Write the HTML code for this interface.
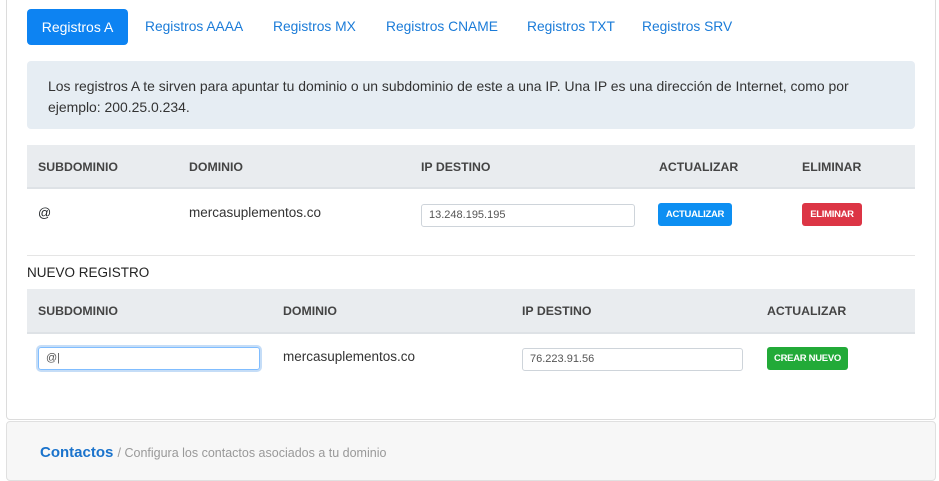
<!DOCTYPE html>
<html><head><meta charset="utf-8"><style>
*{box-sizing:border-box;margin:0;padding:0}
body{width:939px;height:475px;background:#fff;font-family:"Liberation Sans",sans-serif;color:#212529;position:relative;overflow:hidden;font-size:14px}
.a{position:absolute;white-space:nowrap}
.card{position:absolute;left:6px;top:-2px;width:930px;height:422px;border:1px solid #dcdcdc;border-top:none;border-radius:0 0 4px 4px;background:#fff}
.foot{position:absolute;left:6px;top:421px;width:930px;height:60px;background:#f7f7f7;border:1px solid #e0e0e0;border-radius:4px}
.tab{color:#1a7bd8;font-size:13.8px;top:19px}
.th{font-weight:bold;font-size:12.3px;color:#444}
.inp{position:absolute;height:23px;border:1px solid #ced4da;border-radius:3px;font-size:11px;color:#555;padding:4px 7px}
.btn{position:absolute;color:#fff;font-weight:bold;font-size:9.5px;border-radius:3px;text-align:center;line-height:23px;letter-spacing:-0.3px}
</style></head><body>
<div class="card"></div>
<div class="a" style="left:27px;top:9px;width:101px;height:36px;background:#0d83f2;border-radius:4px;color:#fff;text-align:center;line-height:36px;font-size:14px">Registros A</div>
<div class="a tab" style="left:145px">Registros AAAA</div>
<div class="a tab" style="left:273px">Registros MX</div>
<div class="a tab" style="left:386px">Registros CNAME</div>
<div class="a tab" style="left:527px">Registros TXT</div>
<div class="a tab" style="left:642px">Registros SRV</div>
<div class="a" style="left:27px;top:61px;width:888px;height:68px;background:#e6edf3;border-radius:4px"></div>
<div class="a" style="left:48px;top:76px;font-size:13.95px;color:#333;line-height:21px">Los registros A te sirven para apuntar tu dominio o un subdominio de este a una IP. Una IP es una dirección de Internet, como por<br>ejemplo: 200.25.0.234.</div>
<div class="a" style="left:27px;top:145px;width:888px;height:44px;background:#e9ecef;border-bottom:2px solid #dee2e6"></div>
<div class="a th" style="left:38px;top:160px">SUBDOMINIO</div>
<div class="a th" style="left:189px;top:160px">DOMINIO</div>
<div class="a th" style="left:421px;top:160px">IP DESTINO</div>
<div class="a th" style="left:659px;top:160px">ACTUALIZAR</div>
<div class="a th" style="left:802px;top:160px">ELIMINAR</div>
<div class="a" style="left:38px;top:205px;font-size:13px">@</div>
<div class="a" style="left:189px;top:205px;font-size:13.5px;color:#333">mercasuplementos.co</div>
<div class="inp" style="left:421px;top:204px;width:214px">13.248.195.195</div>
<div class="btn" style="left:658px;top:203px;width:74px;background:#0d8ff2">ACTUALIZAR</div>
<div class="btn" style="left:802px;top:203px;width:60px;background:#dc3545">ELIMINAR</div>
<div class="a" style="left:27px;top:255px;width:888px;height:1px;background:#e5e5e5"></div>
<div class="a" style="left:27px;top:265px;font-size:13.5px;color:#222">NUEVO REGISTRO</div>
<div class="a" style="left:27px;top:289px;width:888px;height:45px;background:#e9ecef;border-bottom:2px solid #dee2e6"></div>
<div class="a th" style="left:38px;top:304px">SUBDOMINIO</div>
<div class="a th" style="left:283px;top:304px">DOMINIO</div>
<div class="a th" style="left:522px;top:304px">IP DESTINO</div>
<div class="a th" style="left:767px;top:304px">ACTUALIZAR</div>
<div class="inp" style="left:38px;top:347px;width:222px;border-color:#80bdff;box-shadow:0 0 0 2px #c5ddf7;font-size:11px">@|</div>
<div class="a" style="left:283px;top:349px;font-size:13.5px;color:#333">mercasuplementos.co</div>
<div class="inp" style="left:522px;top:348px;width:221px">76.223.91.56</div>
<div class="btn" style="left:767px;top:347px;width:81px;background:#22aa38">CREAR NUEVO</div>
<div class="foot"></div>
<div class="a" style="left:40px;top:444px;font-size:15px;font-weight:bold;color:#1a73cc">Contactos <span style="font-weight:normal;font-size:12.5px;color:#999">/ Configura los contactos asociados a tu dominio</span></div>
</body></html>
